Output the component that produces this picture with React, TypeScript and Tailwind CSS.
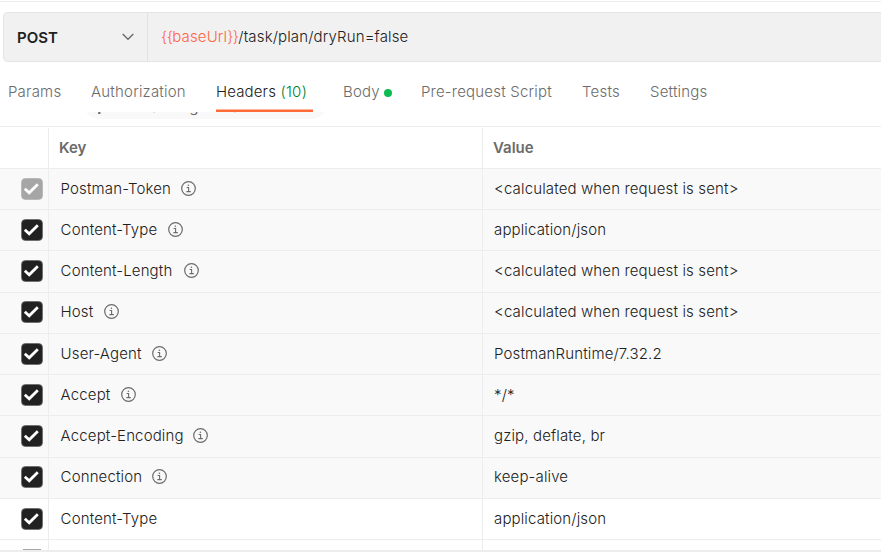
import type { ReactNode } from "react";

type Row = { h: string; name: string; value: string; pad?: string; gap?: string; auto?: boolean; locked?: boolean };

const rows: Row[] = [
  { h: "h-[41px]", name: "Postman-Token", value: "<calculated when request is sent>", gap: "gap-2.5", auto: true, locked: true },
  { h: "h-[41px]", name: "Content-Type", value: "application/json", gap: "gap-[11px]", auto: true },
  { h: "h-[42px]", pad: "pb-px", name: "Content-Length", value: "<calculated when request is sent>", gap: "gap-[11.5px]", auto: true },
  { h: "h-[41px]", pad: "pb-0.5", name: "Host", value: "<calculated when request is sent>", gap: "gap-[11px]", auto: true },
  { h: "h-[41px]", name: "User-Agent", value: "PostmanRuntime/7.32.2", gap: "gap-2.5", auto: true },
  { h: "h-[41px]", name: "Accept", value: "*/*", gap: "gap-[11px]", auto: true },
  { h: "h-[42px]", pad: "pb-px", name: "Accept-Encoding", value: "gzip, deflate, br", gap: "gap-[9px]", auto: true },
  { h: "h-[41px]", pad: "pb-0.5", name: "Connection", value: "keep-alive", gap: "gap-2.5", auto: true },
  { h: "h-[41px]", name: "Content-Type", value: "application/json" },
];

function Check({ locked }: { locked?: boolean }) {
  return (
    <svg width="22" height="22" viewBox="0 0 22 22" className="shrink-0">
      <rect x="0.5" y="0.5" width="21" height="21" rx="4" fill={locked ? "#a6a6a6" : "#212121"} stroke={locked ? "#b4b4b4" : "#6b6b6b"} strokeWidth="0.8" />
      <path d="M3.8 10.8 8.2 14.8 16.8 6.2" fill="none" stroke="#fff" strokeWidth="2.8" />
    </svg>
  );
}

function Info() {
  return (
    <svg width="15" height="15" viewBox="0 0 15 15" fill="none" stroke="#6b6b6b" className="mb-px shrink-0">
      <circle cx="7.5" cy="7.5" r="6.8" strokeWidth="1.2" />
      <path d="M5.6 6.5H7.6V10.6M5.4 10.6H9.8" strokeWidth="1.1" />
      <circle cx="7.4" cy="4.3" r="0.8" fill="#6b6b6b" stroke="none" />
    </svg>
  );
}

function Tab({ w, children }: { w: string; children: ReactNode }) {
  return <div className={`${w} shrink-0 whitespace-nowrap`}>{children}</div>;
}

export default function App() {
  return (
    <div className="flex h-[553px] w-[881px] flex-col overflow-hidden bg-white font-['Inter',sans-serif] text-[15px] leading-5 font-[360] tracking-[0.14px] text-[#212121]">
      <div className="mt-px h-px shrink-0 bg-[#ededed]" />
      <div className="mt-2.5 ml-[3px] flex h-[50px] shrink-0 rounded-l-[5px] border border-r-0 border-[#e4e4e4] bg-[#f1f1f1]">
        <div className="flex w-[144px] items-center justify-between border-r border-[#e1e1e1] pr-[13px] pl-[13px]">
          <span className="mt-0.5 font-semibold tracking-normal">POST</span>
          <svg width="12" height="8" viewBox="0 0 12 8" fill="none" stroke="#6b6b6b" strokeWidth="1.4">
            <path d="M0.7 1 6 6.3 11.3 1" />
          </svg>
        </div>
        <div className="flex items-center pl-[13px]">
          <span className="text-[#ff6444]">
            <span className="tracking-[-0.6px]">{"{{"}</span>baseUrl<span className="tracking-[-0.7px]">{"}}"}</span>
          </span>
          <span>/task/plan/dryRun=false</span>
        </div>
      </div>
      <div className="flex h-[50px] shrink-0 pt-5 pl-2 tracking-[0.2px] text-[#6b6b6b]">
        <Tab w="w-[83px]">Params</Tab>
        <Tab w="w-[125px]">Authorization</Tab>
        <div className="mr-[30px] flex h-[30px] w-[97px] shrink-0 flex-col justify-between border-b-2 border-[#ff6c37] whitespace-nowrap text-[#212121]">
          <span className="tracking-[0.14px]">
            Headers <span className="text-[#007f31] tracking-[0.3px]">(10)</span>
          </span>
          <span className="h-px bg-[#ffb59b]" />
        </div>
        <Tab w="w-[78px]">
          <span className="flex items-center gap-1">
            Body <span className="mt-0.5 h-2 w-2 rounded-full bg-[#0cbb52]" />
          </span>
        </Tab>
        <Tab w="w-[161px]">Pre-request Script</Tab>
        <Tab w="w-[68px]">Tests</Tab>
        <Tab w="w-[80px]">Settings</Tab>
      </div>
      <div className="flex h-[14px] shrink-0 items-start overflow-hidden pl-[84px]">
        <div className="-mt-[23px] flex h-[30px] w-[243px] shrink-0 items-center rounded-[15px] bg-[#f9f9f9] pt-1.5 pl-[13px] font-normal text-[#6b6b6b]">
          <svg width="14" height="16" viewBox="0 0 14 16" fill="none" stroke="#6b6b6b" className="mr-0.5">
            <path d="M1 6Q7 0 13 6Q7 12 1 6" />
            <path d="M1.2 14H3.4" strokeWidth="2" />
          </svg>
          Hide auto-generated
        </div>
      </div>
      <div className="flex h-[43px] shrink-0 border-y border-[#ededed] font-semibold tracking-normal text-[#6b6b6b]">
        <div className="mt-px w-[49px] border-r border-[#ededed]" />
        <div className="mt-px flex w-[434px] items-center border-r border-[#ededed] pl-2.5">Key</div>
        <div className="flex items-center pl-2.5">Value</div>
      </div>
      {rows.map((r, i) => (
        <div key={i} className={`flex shrink-0 items-stretch border-b border-[#ededed] ${r.h} ${r.auto ? "bg-[#f9f9f9]" : "bg-white"}`}>
          <div className={`flex w-[49px] items-center border-r border-[#ededed] pl-[21px] ${r.pad ?? ""}`}>
            <Check locked={r.locked} />
          </div>
          <div className={`flex w-[434px] items-center border-r border-[#ededed] pl-[11.6px] ${r.gap ?? ""} ${r.pad ?? ""}`}>
            {r.name}
            {r.auto && <Info />}
          </div>
          <div className={`flex items-center pl-[11px] ${r.pad ?? ""}`}>{r.value}</div>
        </div>
      ))}
      <div className="flex h-2.5 shrink-0 overflow-hidden">
        <div className="flex w-[49px] items-end border-r border-[#ededed] pl-[23px]">
          <div className="h-px w-[18px] bg-[#a6a6a6]" />
        </div>
        <div className="w-[434px] border-r border-[#ededed]" />
      </div>
      <div className="h-0.5 shrink-0 bg-[#ededed]" />
    </div>
  );
}
